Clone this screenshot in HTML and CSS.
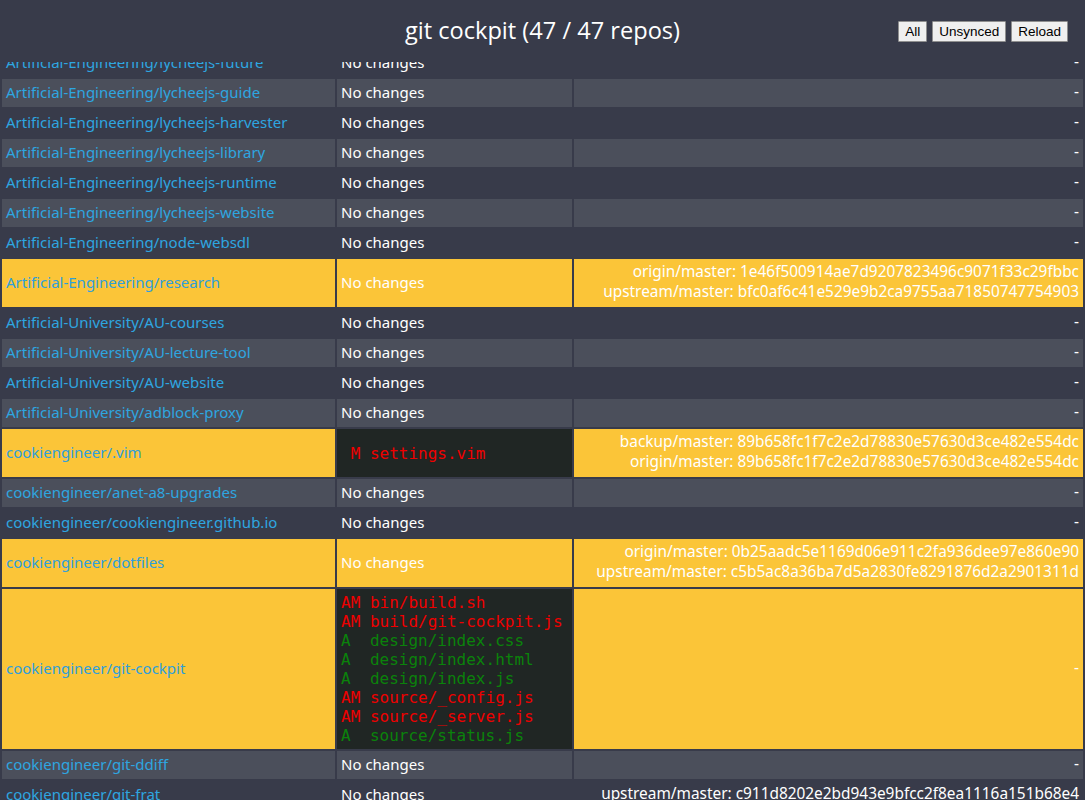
FILE: index.html
```html
<!DOCTYPE html>
<html>
<head>
<meta charset="utf-8">
<title>git cockpit</title>
<link rel="stylesheet" href="styles.css">
</head>
<body>
<header class="header">
  <h1 class="title">git cockpit (47 / 47 repos)</h1>
  <div class="actions">
    <button class="btn">All</button>
    <button class="btn">Unsynced</button>
    <button class="btn">Reload</button>
  </div>
</header>
<main class="main">
<table class="repos">
  <colgroup><col class="c1"><col class="c2"><col class="c3"></colgroup>
  <tbody>
    <tr><td><a>Artificial-Engineering/lycheejs-future</a></td><td>No changes</td><td class="sync">-</td></tr>
    <tr><td><a>Artificial-Engineering/lycheejs-guide</a></td><td>No changes</td><td class="sync">-</td></tr>
    <tr><td><a>Artificial-Engineering/lycheejs-harvester</a></td><td>No changes</td><td class="sync">-</td></tr>
    <tr><td><a>Artificial-Engineering/lycheejs-library</a></td><td>No changes</td><td class="sync">-</td></tr>
    <tr><td><a>Artificial-Engineering/lycheejs-runtime</a></td><td>No changes</td><td class="sync">-</td></tr>
    <tr><td><a>Artificial-Engineering/lycheejs-website</a></td><td>No changes</td><td class="sync">-</td></tr>
    <tr><td><a>Artificial-Engineering/node-websdl</a></td><td>No changes</td><td class="sync">-</td></tr>
    <tr class="unsynced"><td><a>Artificial-Engineering/research</a></td><td>No changes</td><td class="sync">origin/master: 1e46f500914ae7d9207823496c9071f33c29fbbc<br>upstream/master: bfc0af6c41e529e9b2ca9755aa71850747754903</td></tr>
    <tr><td><a>Artificial-University/AU-courses</a></td><td>No changes</td><td class="sync">-</td></tr>
    <tr><td><a>Artificial-University/AU-lecture-tool</a></td><td>No changes</td><td class="sync">-</td></tr>
    <tr><td><a>Artificial-University/AU-website</a></td><td>No changes</td><td class="sync">-</td></tr>
    <tr><td><a>Artificial-University/adblock-proxy</a></td><td>No changes</td><td class="sync">-</td></tr>
    <tr class="unsynced"><td><a>cookiengineer/.vim</a></td><td class="diff"><pre class="status"><span class="mod"> M settings.vim</span></pre></td><td class="sync">backup/master: 89b658fc1f7c2e2d78830e57630d3ce482e554dc<br>origin/master: 89b658fc1f7c2e2d78830e57630d3ce482e554dc</td></tr>
    <tr><td><a>cookiengineer/anet-a8-upgrades</a></td><td>No changes</td><td class="sync">-</td></tr>
    <tr><td><a>cookiengineer/cookiengineer.github.io</a></td><td>No changes</td><td class="sync">-</td></tr>
    <tr class="unsynced"><td><a>cookiengineer/dotfiles</a></td><td>No changes</td><td class="sync">origin/master: 0b25aadc5e1169d06e911c2fa936dee97e860e90<br>upstream/master: c5b5ac8a36ba7d5a2830fe8291876d2a2901311d</td></tr>
    <tr class="unsynced"><td><a>cookiengineer/git-cockpit</a></td><td class="diff"><pre class="status"><span class="mod">AM bin/build.sh</span>
<span class="mod">AM build/git-cockpit.js</span>
<span class="add">A  design/index.css</span>
<span class="add">A  design/index.html</span>
<span class="add">A  design/index.js</span>
<span class="mod">AM source/_config.js</span>
<span class="mod">AM source/_server.js</span>
<span class="add">A  source/status.js</span></pre></td><td class="sync">-</td></tr>
    <tr><td><a>cookiengineer/git-ddiff</a></td><td>No changes</td><td class="sync">-</td></tr>
    <tr><td><a>cookiengineer/git-frat</a></td><td>No changes</td><td class="sync">upstream/master: c911d8202e2bd943e9bfcc2f8ea1116a151b68e4</td></tr>
    <tr><td><a>cookiengineer/git-hooks</a></td><td>No changes</td><td class="sync">-</td></tr>
  </tbody>
</table>
</main>
</body>
</html>
```

FILE: styles.css
```css
html, body {
  margin: 0;
  padding: 0;
  background: #383b4a;
  color: #ffffff;
  font-family: "Noto Sans", "Open Sans", sans-serif;
  font-size: 15px;
}

.header {
  position: fixed;
  top: 0;
  left: 0;
  right: 0;
  height: 62px;
  background: #383b4a;
  display: flex;
  align-items: center;
  justify-content: center;
  z-index: 2;
}

.title {
  margin: 0 0 2px 0;
  font-family: "Open Sans", "Noto Sans", sans-serif;
  font-weight: normal;
  font-size: 23.6px;
  color: #ffffff;
}

.actions {
  position: absolute;
  right: 17px;
  top: 21px;
  display: flex;
  gap: 5px;
}

.btn {
  font-family: "Liberation Sans", Arial, sans-serif;
  font-size: 13.5px;
  height: 21px;
  padding: 1px 6px;
  background: #efefef;
  color: #000000;
  border: 1px solid #8f8f8f;
  border-radius: 1px;
}

.main {
  padding-top: 47px;
}

.repos {
  width: 100%;
  border-spacing: 2px;
  table-layout: fixed;
}

.c1 { width: 333px; }
.c2 { width: 235px; }

.repos td {
  padding: 3px 4px 5px 4px;
  line-height: 20px;
  vertical-align: middle;
  white-space: nowrap;
  overflow: hidden;
}

.repos tr:nth-child(even) td {
  background: #4b4f5b;
}

.repos tr.unsynced td {
  background: #fbc538;
}

.repos a {
  color: #2ea6e0;
  text-decoration: none;
}

.repos tr.unsynced a {
  color: #2f9fdb;
}

.sync {
  text-align: right;
  font-size: 15.4px;
}

.repos tr td.diff {
  background: #202624;
  padding: 4px;
}

.status {
  margin: 0;
  font-family: "DejaVu Sans Mono", monospace;
  font-size: 16px;
  line-height: 19px;
}

.mod { color: #ee0000; }
.add { color: #0b820b; }
```
